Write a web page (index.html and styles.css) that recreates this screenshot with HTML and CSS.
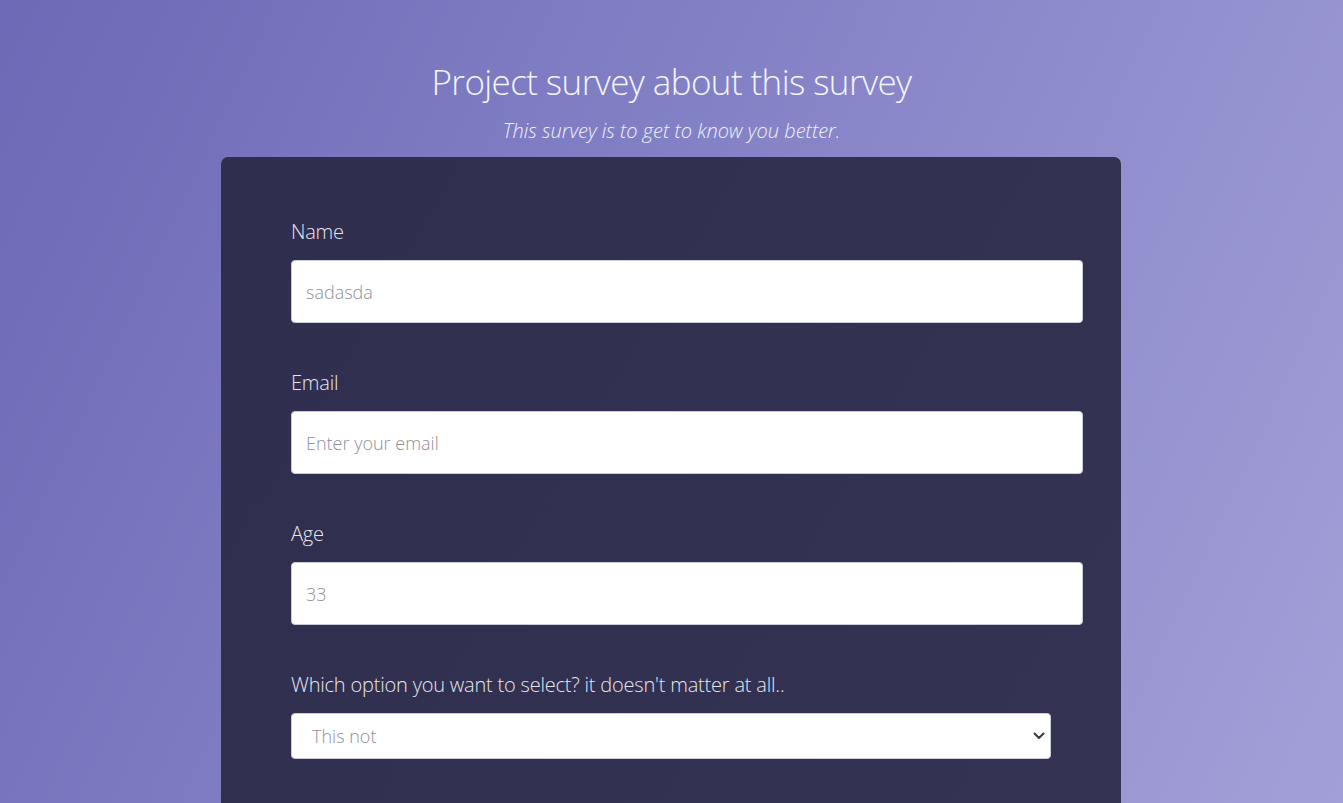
FILE: index.html
```html
<!DOCTYPE html>
<html lang="en">
<head>
<meta charset="utf-8">
<title>Survey</title>
<link rel="stylesheet" href="styles.css">
</head>
<body>
<div class="page">
  <header class="head">
    <h1 class="title">Project survey about this survey</h1>
    <p class="subtitle">This survey is to get to know you better.</p>
  </header>
  <form class="card">
    <div class="field">
      <label class="label" for="name">Name</label>
      <input class="input" id="name" type="text" placeholder="sadasda">
    </div>
    <div class="field">
      <label class="label" for="email">Email</label>
      <input class="input" id="email" type="email" placeholder="Enter your email">
    </div>
    <div class="field">
      <label class="label" for="age">Age</label>
      <input class="input" id="age" type="number" placeholder="33">
    </div>
    <div class="field">
      <label class="label" for="opt">Which option you want to select? it doesn't matter at all..</label>
      <div class="select-wrap">
        <select class="select" id="opt">
          <option>This not</option>
          <option>That one</option>
        </select>
        <svg class="chev" width="12" height="8" viewBox="0 0 12 8"><path d="M1.5 1.5 L6 6 L10.5 1.5" fill="none" stroke="#343a40" stroke-width="2" stroke-linecap="round" stroke-linejoin="round"/></svg>
      </div>
    </div>
  </form>
</div>
</body>
</html>
```

FILE: styles.css
```css
html, body {
  margin: 0;
  padding: 0;
  height: 100%;
}
body {
  font-family: "Open Sans", "Noto Sans", sans-serif;
  background: linear-gradient(115deg, #6c69b6 0%, #8482c6 45%, #a29fd8 100%);
  min-height: 803px;
  overflow: hidden;
}
.page {
  display: flex;
  flex-direction: column;
  align-items: center;
}
.head {
  display: flex;
  flex-direction: column;
  align-items: center;
  padding-top: 58px;
}
.title {
  margin: 0;
  font-weight: 300;
  font-size: 35px;
  line-height: 48px;
  color: #f4f4fb;
  letter-spacing: -0.6px;
}
.subtitle {
  margin: 12px 0 0 0;
  font-style: italic;
  font-weight: 300;
  font-size: 20px;
  line-height: 26px;
  color: #f0f0f8;
  letter-spacing: 0;
}
.card {
  margin: 13px 1px 0 0;
  width: 900px;
  box-sizing: border-box;
  padding: 62px 38px 40px 70px;
  background: linear-gradient(120deg, #2f2e4e 0%, #343353 100%);
  border-radius: 7px;
  display: flex;
  flex-direction: column;
  gap: 47px;
  min-height: 660px;
}
.field {
  display: flex;
  flex-direction: column;
}
.label {
  color: #e6e6ef;
  font-size: 20px;
  font-weight: 300;
  line-height: 26px;
  margin-bottom: 15px;
  letter-spacing: -0.2px;
}
.input {
  height: 63px;
  box-sizing: border-box;
  border: 1px solid #c9cbd6;
  border-radius: 4px;
  background: #fff;
  padding: 0 14px;
  font-family: "Open Sans", "Noto Sans", sans-serif;
  font-size: 18px;
  font-weight: 300;
  color: #495057;
}
.input::placeholder {
  color: #8f8f98;
}
.select-wrap {
  position: relative;
  width: 760px;
}
.select {
  width: 100%;
  height: 46px;
  box-sizing: border-box;
  appearance: none;
  -webkit-appearance: none;
  border: 1px solid #c9cbd6;
  border-radius: 4px;
  background: #fff;
  padding: 0 20px;
  font-family: "Open Sans", "Noto Sans", sans-serif;
  font-size: 18px;
  font-weight: 300;
  color: #8f8f98;
}
.chev {
  position: absolute;
  right: 6px;
  top: 19px;
  pointer-events: none;
}
```
